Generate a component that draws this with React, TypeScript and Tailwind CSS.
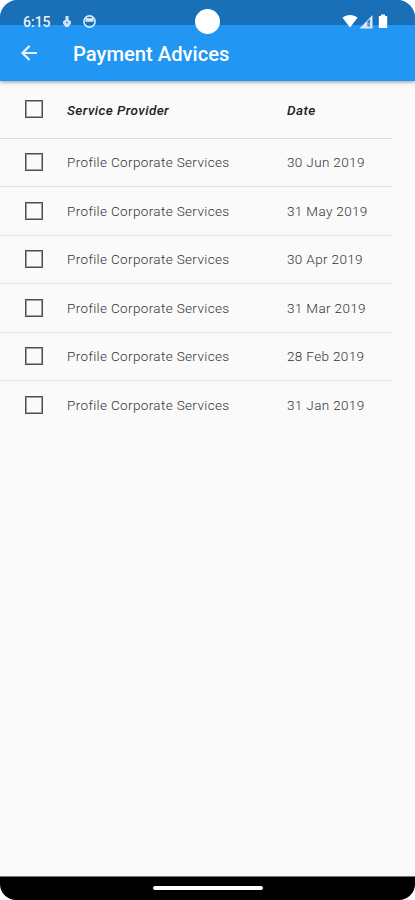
import { useState } from "react";

const advices = [
  { id: 1, provider: "Profile Corporate Services", date: "30 Jun 2019" },
  { id: 2, provider: "Profile Corporate Services", date: "31 May 2019" },
  { id: 3, provider: "Profile Corporate Services", date: "30 Apr 2019" },
  { id: 4, provider: "Profile Corporate Services", date: "31 Mar 2019" },
  { id: 5, provider: "Profile Corporate Services", date: "28 Feb 2019" },
  { id: 6, provider: "Profile Corporate Services", date: "31 Jan 2019" },
];

function Checkbox({ checked, onClick }: { checked: boolean; onClick: () => void }) {
  return (
    <button
      role="checkbox"
      aria-checked={checked}
      onClick={onClick}
      className={`ml-[25px] mr-6 h-[18px] w-[18px] shrink-0 border border-[#4d4d4d] shadow-[inset_0_0_0_1px_#a0a0a0] ${
        checked ? "bg-[#2196f3]" : ""
      }`}
    />
  );
}

function StatusBar() {
  return (
    <div className="flex h-[25px] items-start bg-[#1a70b6] pl-[23px] text-[#e6f1fb]">
      <span className="mt-[13px] w-[40px] text-[14px] leading-[18px] font-medium">6:15</span>
      {/* Debug icon */}
      <svg className="mt-[15px] h-[13px] w-2" viewBox="0 0 8 13" fill="#cfe4f8">
        <path d="M2.500 1h3v3.500L8 6.500v2L5.500 12h-3L0 8.500v-2l2.500-2z" />
        <circle cx="4" cy="7.500" r="1.100" fill="#4b94d6" />
      </svg>
      {/* Face icon */}
      <svg className="mt-[15px] ml-3 h-[13px] w-[13px]" viewBox="0 0 13 13" fill="none">
        <circle cx="6.500" cy="6.500" r="5.600" stroke="#dcebfa" strokeWidth="1.600" />
        <path d="M2.500 4V2l2 1.300h4l2-1.300v4.800h-8z" fill="#dcebfa" />
      </svg>
      <div className="w-[99px]" />
      <div className="z-10 mt-[9px] h-[25px] w-[25px] shrink-0 rounded-full bg-white" />
      {/* Wifi, signal, battery */}
      <svg className="mt-[14px] ml-[122px] h-[14px] w-[16px]" viewBox="0 0 16 14" fill="white">
        <path d="M.5 3.800C4.500.2 11.500.2 15.500 3.800L8 13.500z" />
      </svg>
      <svg className="mt-[14px] ml-[1px] h-[15px] w-[14px]" viewBox="0 0 14 15">
        <path d="M.5 14.500L13.500 1v13.500z" fill="#d5e7f9" />
        <path d="M8.500 7.500L11 5v7.500H8.500z" fill="#2b79ba" />
        <path d="M9.500 8.500h1v3h-1z" fill="#9bc6ee" />
      </svg>
      <svg className="mt-[14px] ml-[5px] h-[15px] w-[10px]" viewBox="0 0 10 15" fill="white">
        <path d="M3 .5h4V2h1.500q.7 0 .7.700V13.300q0 .7-.7.700h-7q-.7 0-.7-.7V2.700q0-.7.7-.7H3z" />
      </svg>
    </div>
  );
}

export default function App() {
  const [selected, setSelected] = useState<number[]>([]);
  const allSelected = selected.length === advices.length;

  const toggle = (id: number) => {
    setSelected((prev) => (prev.includes(id) ? prev.filter((i) => i !== id) : [...prev, id]));
  };

  return (
    <div className="h-[900px] w-[415px] bg-white font-['Roboto',sans-serif]">
      <div className="flex h-full flex-col overflow-hidden rounded-t-[18px] rounded-b-[16px] bg-[#fafafa]">
        <header className="z-10 h-[81px] shrink-0 bg-[#2196f3] shadow-[0_1px_4px_rgba(0,0,0,0.4)]">
          <StatusBar />
          <div className="flex h-14 items-center pl-5 text-white">
            <button aria-label="Back">
              <svg className="h-[18px] w-[18px]" viewBox="0 0 18 18" fill="none" stroke="#e8f3fe" strokeWidth="2.200">
                <path d="M17 9H2.500M9.500 2L2.500 9l7 7" />
              </svg>
            </button>
            <h1 className="ml-[35px] mt-0.5 text-[20.200px] leading-6 font-medium">Payment Advices</h1>
          </div>
        </header>

        <main className="flex-1">
          <div className="mr-[23px]">
            <div className="flex h-[57.500px] items-center border-b border-[#dcdcdc] text-[13.500px] font-medium tracking-[0.4px] text-[#222] italic">
              <Checkbox
                checked={allSelected}
                onClick={() => setSelected(allSelected ? [] : advices.map((a) => a.id))}
              />
              <span className="w-[220px] pt-px">Service Provider</span>
              <span className="pt-px">Date</span>
            </div>
            {advices.map((advice) => (
              <div
                key={advice.id}
                className="flex h-[48.500px] items-center border-b border-[#e2e2e2] text-[13.500px] font-light tracking-[0.36px] text-[#333] last:border-b-0"
              >
                <Checkbox checked={selected.includes(advice.id)} onClick={() => toggle(advice.id)} />
                <span className="w-[220px]">{advice.provider}</span>
                <span>{advice.date}</span>
              </div>
            ))}
          </div>
        </main>

        <nav className="flex h-[24px] shrink-0 justify-center border-t border-[#777] bg-black pt-[9px]">
          <div className="h-1 w-[110px] rounded-full bg-white" />
        </nav>
      </div>
    </div>
  );
}
